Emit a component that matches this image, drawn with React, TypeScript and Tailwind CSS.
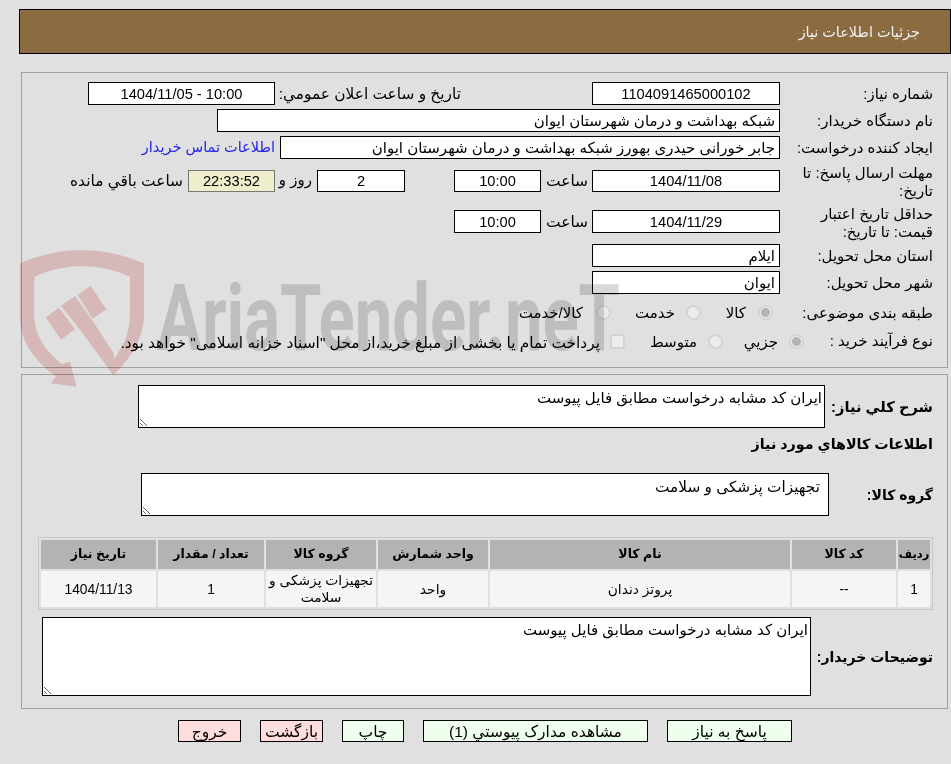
import React from "react";

const FONT = "font-['Liberation_Sans','DejaVu_Sans',sans-serif]";

const Field: React.FC<{ value: string; className: string; center?: boolean }> = ({ value, className, center }) => (
  <input
    readOnly
    value={value}
    dir={center ? "ltr" : "rtl"}
    className={`${className} h-[23px] shrink-0 border border-black bg-white px-[4px] text-black outline-none ${center ? "text-center text-[14.67px]" : "text-right text-[15px]"}`}
  />
);

const Label: React.FC<{ className: string; children: React.ReactNode }> = ({ className, children }) => (
  <div className={`${className} shrink-0 whitespace-nowrap text-right leading-[18px]`}>{children}</div>
);

const Radio: React.FC<{ checked?: boolean }> = ({ checked }) => (
  <input
    type="radio"
    disabled
    checked={!!checked}
    readOnly
    className={`h-[15px] w-[15px] shrink-0 appearance-none rounded-full border-2 border-[#d4d4d4] ${checked ? "bg-[radial-gradient(circle,#b4b4b4_0,#b4b4b4_4px,#ececec_5px)]" : "bg-[#ececec]"}`}
  />
);

const Watermark = () => (
  <div className="pointer-events-none absolute left-0 top-0 z-10 h-[400px] w-[951px] mix-blend-multiply">
    <svg className="absolute left-[15px] top-[240px]" width="150" height="160" viewBox="0 0 450 480" fill="#f4d2d2">
      <path d="M15 70 Q200 -10 387 70 L387 235 Q380 325 295 405 L275 380 Q345 310 345 225 L345 110 Q200 46 58 110 L58 235 Q62 310 140 372 L165 365 L185 440 L108 430 L122 410 Q15 330 15 235 Z" />
      <path d="M138 197 L180 168 L228 235 L297 342 L295 405 L180 250 Z" />
      <path d="M92 232 L132 203 L180 268 L138 299 Z" />
      <path d="M188 165 L227 137 L274 208 L233 236 Z" />
    </svg>
    <div
      dir="ltr"
      className="absolute left-[157px] top-[264px] origin-left scale-x-[0.72] whitespace-nowrap font-['Roboto',sans-serif] text-[93px] font-bold leading-[110px] text-[#d9d9d9]"
    >
      AriaTender.neT
    </div>
  </div>
);

const cols = ["w-[32px] text-[11.5px]", "w-[104px]", "w-[300px]", "w-[110px]", "w-[110px]", "w-[106px]", "w-[115px]"];
const heads = ["ردیف", "کد کالا", "نام کالا", "واحد شمارش", "گروه کالا", "تعداد / مقدار", "تاریخ نیاز"];
const cells = ["1", "--", "پروتز دندان", "واحد", "تجهیزات پزشکی و سلامت", "1", "1404/11/13"];

const actions = [
  { text: "پاسخ به نیاز", w: "w-[125px]", bg: "bg-[#eeffee]" },
  { text: "مشاهده مدارک پیوستي (1)", w: "w-[225px]", bg: "bg-[#eeffee]" },
  { text: "چاپ", w: "w-[62px]", bg: "bg-[#eeffee]" },
  { text: "بازگشت", w: "w-[63px]", bg: "bg-[#ffdddd]" },
  { text: "خروج", w: "w-[63px]", bg: "bg-[#ffdddd]" },
];

export default function App() {
  return (
    <div dir="rtl" className={`${FONT} relative h-[764px] w-[951px] overflow-hidden bg-[#e0e0e0] pt-[9px] text-[15px] text-black`}>
      <Watermark />

      <div className="ml-[19px] flex h-[45px] items-center border border-black bg-[#8b6b40] pr-[30px] pt-[2px] text-[14.4px] text-[#f2f2f2]">
        جزئیات اطلاعات نیاز
      </div>

      {/* first panel */}
      <div className="ml-[21px] mr-[3px] mt-[18px] h-[296px] border border-[#a0a0a0] pr-[14px] pt-[9px]">
        <div className="flex h-[23px] items-center">
          <Label className="w-[153px] pt-[1px]">شماره نیاز:</Label>
          <Field center value="1104091465000102" className="w-[188px]" />
          <div className="w-[131px] shrink-0" />
          <Label className="w-[186px] pt-[1px] text-[15.4px]">تاریخ و ساعت اعلان عمومي:</Label>
          <Field center value="1404/11/05 - 10:00" className="w-[187px]" />
        </div>
        <div className="mt-[4px] flex h-[23px] items-center">
          <Label className="w-[153px] pt-[1px]">نام دستگاه خریدار:</Label>
          <Field value="شبکه بهداشت و درمان شهرستان ایوان" className="w-[563px]" />
        </div>
        <div className="mt-[4px] flex h-[23px] items-center">
          <Label className="w-[153px]">ایجاد کننده درخواست:</Label>
          <Field value="جابر خورانی حیدری بهورز شبکه بهداشت و درمان شهرستان ایوان" className="w-[500px]" />
          <a className="mr-[5px] whitespace-nowrap text-[14.5px] text-[#2222ee]">اطلاعات تماس خریدار</a>
        </div>

        <div className="mt-[5px] flex h-[41px] items-start">
          <Label className="w-[153px]">
            مهلت ارسال پاسخ: تا
            <br />
            تاریخ:
          </Label>
          <div className="mt-[5px] flex items-center">
            <Field center value="1404/11/08" className="w-[188px] !h-[22px]" />
            <div className="w-[51px] shrink-0 pr-[4px] text-[15.4px]">ساعت</div>
            <Field center value="10:00" className="w-[87px] !h-[22px]" />
            <div className="w-[49px] shrink-0" />
            <Field center value="2" className="w-[88px] !h-[22px]" />
            <div className="w-[42px] shrink-0 whitespace-nowrap pr-[5px]">روز و</div>
            <input
              readOnly
              value="22:33:52"
              className="h-[22px] w-[87px] shrink-0 border border-[#777] bg-[#eeeecc] text-center text-[14.67px] outline-none"
            />
            <div className="mr-[5px] whitespace-nowrap text-[15.4px]">ساعت باقي مانده</div>
          </div>
        </div>
        <div className="flex h-[39px] items-start">
          <Label className="w-[153px]">
            حداقل تاریخ اعتبار
            <br />
            قیمت: تا تاریخ:
          </Label>
          <div className="mt-[5px] flex items-center">
            <Field center value="1404/11/29" className="w-[188px]" />
            <div className="w-[51px] shrink-0 pr-[4px] text-[15.4px]">ساعت</div>
            <Field center value="10:00" className="w-[87px]" />
          </div>
        </div>

        <div className="flex h-[23px] items-center">
          <Label className="w-[153px]">استان محل تحویل:</Label>
          <Field value="ایلام" className="w-[188px]" />
        </div>
        <div className="mt-[4px] flex h-[23px] items-center">
          <Label className="w-[153px]">شهر محل تحویل:</Label>
          <Field value="ایوان" className="w-[188px]" />
        </div>

        <div className="mt-[7px] flex h-[22px] items-center">
          <Label className="w-[160px] pt-[1px]">طبقه بندی موضوعی:</Label>
          <Radio checked />
          <div className="mr-[12px] w-[20px] shrink-0 whitespace-nowrap pt-[3px]">کالا</div>
          <div className="w-[25px] shrink-0" />
          <Radio />
          <div className="mr-[11px] w-[40px] shrink-0 whitespace-nowrap pt-[3px]">خدمت</div>
          <div className="w-[24px] shrink-0" />
          <Radio />
          <div className="mr-[13px] whitespace-nowrap pt-[3px]">کالا/خدمت</div>
        </div>
        <div className="mt-[7px] flex h-[22px] items-center">
          <Label className="w-[129px]">نوع فرآیند خرید :</Label>
          <Radio checked />
          <div className="mr-[11px] w-[35px] shrink-0 whitespace-nowrap pt-[3px]">جزیي</div>
          <div className="w-[20px] shrink-0" />
          <Radio />
          <div className="mr-[11px] w-[46px] shrink-0 whitespace-nowrap pt-[3px]">متوسط</div>
          <div className="w-[26px] shrink-0" />
          <input type="checkbox" disabled className="h-[15px] w-[15px] shrink-0 appearance-none rounded-[2px] border-2 border-[#d4d4d4] bg-[#ececec]" />
          <div className="mr-[10px] whitespace-nowrap pt-[3px] text-[15.4px]">پرداخت تمام یا بخشی از مبلغ خرید،از محل "اسناد خزانه اسلامی" خواهد بود.</div>
        </div>
      </div>

      {/* second panel */}
      <div className="ml-[21px] mr-[3px] mt-[6px] h-[335px] border border-[#a0a0a0] pr-[14px] pt-[10px]">
        <div className="flex h-[43px] items-center">
          <Label className="w-[108px] pt-[1px] text-[14.67px] font-bold">شرح کلي نیاز:</Label>
          <textarea readOnly defaultValue="ایران کد مشابه درخواست مطابق فایل پیوست" className="h-[43px] w-[687px] rounded-none border border-black bg-white px-[2px] pt-[3px] text-[15px] leading-[18px] outline-none" />
        </div>
        <div className="mt-[7px] h-[18px] text-right text-[14.3px] font-bold leading-[18px]">اطلاعات کالاهاي مورد نیاز</div>
        <div className="mt-[20px] flex h-[43px] items-center">
          <Label className="w-[104px] text-[14px] font-bold">گروه کالا:</Label>
          <textarea readOnly defaultValue="تجهیزات پزشکی و سلامت" className="h-[43px] w-[688px] rounded-none border border-black bg-white px-[8px] py-[4px] text-[15.3px] leading-[18px] outline-none" />
        </div>

        <table className="mt-[21px] w-[895px] table-fixed border-separate border-spacing-[2px] border border-[#c8c8c8] text-[12.5px]">
          <thead>
            <tr>
              {heads.map((h, i) => (
                <th key={h} className={`${cols[i]} h-[29px] bg-[#b3b3b3] p-0 text-center font-bold`}>{h}</th>
              ))}
            </tr>
          </thead>
          <tbody>
            <tr>
              {cells.map((c, i) => (
                <td key={i} className="h-[36px] bg-[#f5f5f5] p-0 px-[2px] text-center text-[13.8px] leading-[17px]">{c}</td>
              ))}
            </tr>
          </tbody>
        </table>

        <div className="mt-[7px] flex h-[79px] items-center">
          <Label className="w-[122px] text-[14px] font-bold">توضیحات خریدار:</Label>
          <textarea readOnly defaultValue="ایران کد مشابه درخواست مطابق فایل پیوست" className="h-[79px] w-[769px] rounded-none border border-black bg-white px-[2px] py-[3px] text-[15px] leading-[18px] outline-none" />
        </div>
      </div>

      {/* actions */}
      <div className="mr-[159px] mt-[11px] flex gap-[19px]">
        {actions.map((a) => (
          <button key={a.text} className={`${a.w} ${a.bg} h-[22px] shrink-0 border border-black pt-[1px] text-[15.5px] leading-[18px]`}>
            {a.text}
          </button>
        ))}
      </div>
    </div>
  );
}
